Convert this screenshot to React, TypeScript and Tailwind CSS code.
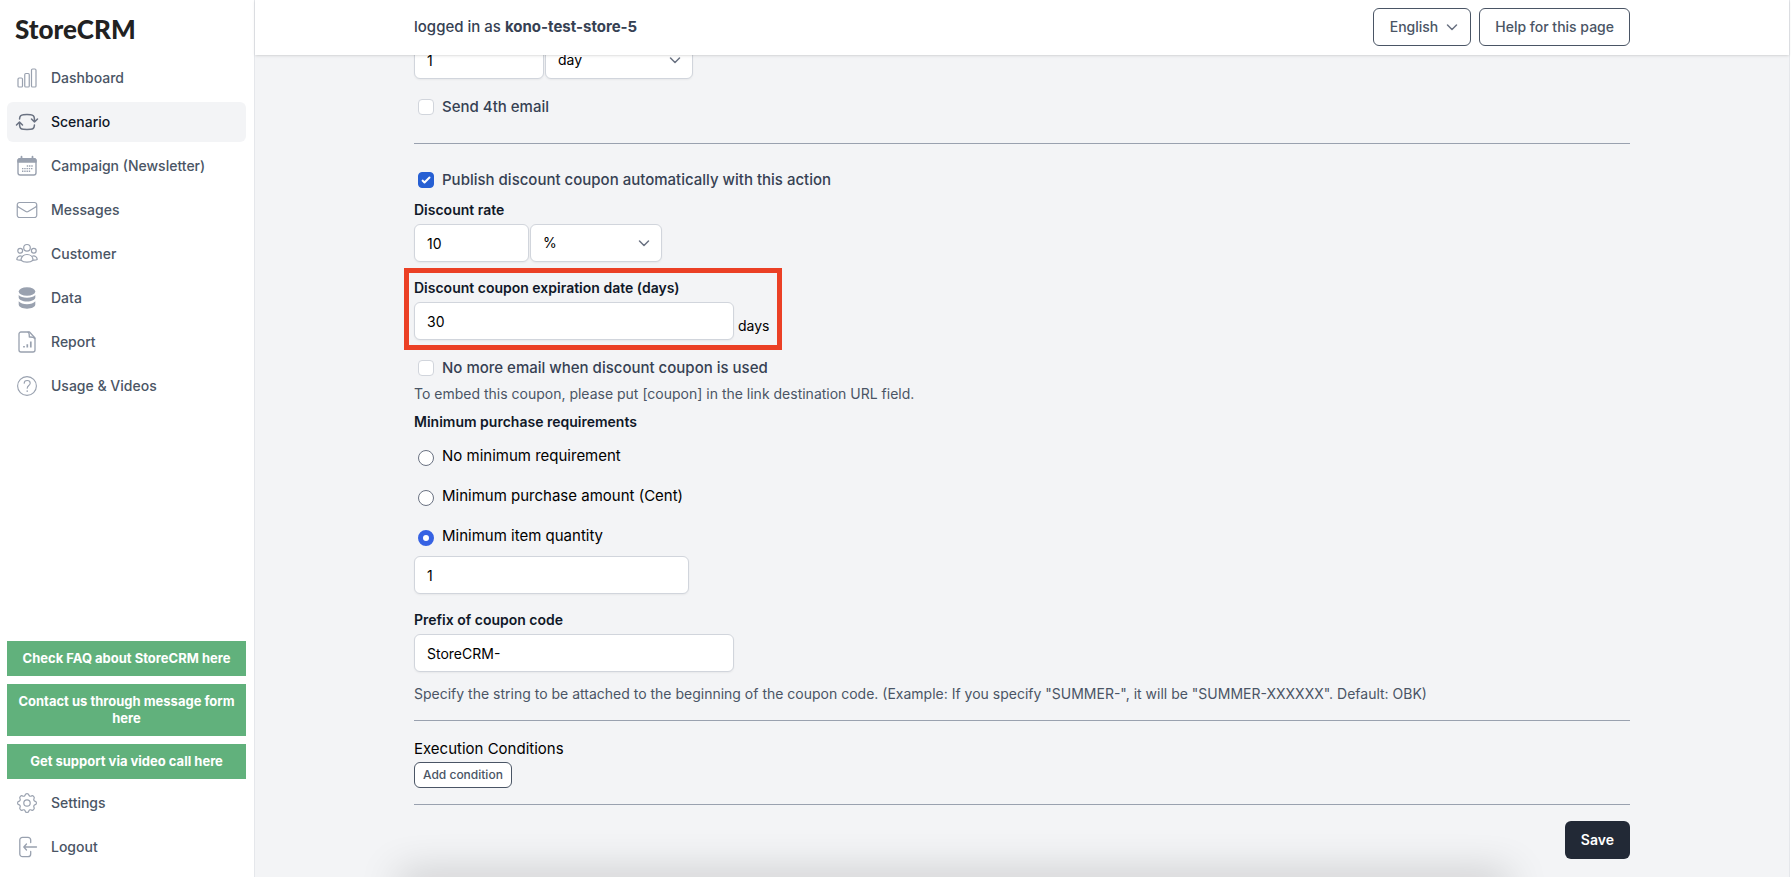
import React from "react";
import {
  HiOutlineArrowPathRoundedSquare,
  HiOutlineChartBar,
  HiOutlineEnvelope,
} from "react-icons/hi2";

const svgProps = {
  viewBox: "0 0 24 24",
  fill: "none",
  stroke: "currentColor",
  strokeLinecap: "round" as const,
  strokeLinejoin: "round" as const,
  "aria-hidden": true,
};

function CalendarIcon() {
  return (
    <svg {...svgProps} strokeWidth={1.4} className="size-6">
      <rect x="3" y="4.7" width="18" height="16.3" rx="2.2" />
      <path d="M3 8V6.500C3 5.500 4 4.700 5 4.700h14c1 0 2 .8 2 1.800V8z" fill="currentColor" />
      <path d="M6.500 2.700v2M17.500 2.700v2" strokeWidth={1.8} />
      <path d="M11.800 12h6.500M7 14.600h11.300M7 17.200h9" strokeWidth={1.400} strokeLinecap="butt" strokeDasharray="1.400 .850" />
    </svg>
  );
}

function CustomerIcon() {
  return (
    <svg {...svgProps} strokeWidth={1.2} className="size-6">
      <circle cx="12" cy="5.800" r="3.300" />
      <circle cx="5.200" cy="8.800" r="2.400" />
      <circle cx="18.800" cy="8.800" r="2.400" />
      <path d="M6 18.200c0-3.300 2.500-5.700 6-5.700s6 2.400 6 5.700c-1.600 1.500-3.700 2-6 2s-4.400-.5-6-2z" />
      <path d="M6.700 14.200c-2.900-.9-4.700 1-4.900 3.200.9.600 2.200.8 3.700.7M17.300 14.200c2.900-.9 4.700 1 4.900 3.200-.9.600-2.200.8-3.700.7" />
    </svg>
  );
}

function DataIcon() {
  return (
    <svg viewBox="0 0 24 24" fill="currentColor" aria-hidden className="size-6">
      <ellipse cx="12" cy="5.500" rx="8.300" ry="4.300" />
      <path d="M3.700 9c1.500 1.700 4.600 2.800 8.300 2.800s6.800-1.100 8.300-2.800v2.600c0 2.200-3.700 4-8.300 4s-8.300-1.800-8.300-4z" />
      <path d="M3.700 15.300c1.500 1.800 4.600 2.900 8.300 2.900s6.800-1.100 8.300-2.900v3.200c0 2.300-3.700 4.200-8.300 4.200s-8.300-1.900-8.300-4.200z" />
    </svg>
  );
}

function ReportIcon() {
  return (
    <svg {...svgProps} strokeWidth={1.3} className="size-6">
      <path d="M6 2h8.500L20 8v12a2 2 0 0 1-2 2H6a2 2 0 0 1-2-2V4a2 2 0 0 1 2-2z" />
      <path d="M13 2.200c1.500.6 1.300 2.300 1.300 4.800 2.900 0 4.800-.2 5.500 1.700" />
      <path d="M9 17.500V16M12.300 17.500v-3.300M15.800 17.500v-6" strokeWidth={1.700} strokeLinecap="butt" />
    </svg>
  );
}

function HelpIcon() {
  return (
    <svg {...svgProps} strokeWidth={1.1} className="size-6">
      <circle cx="12" cy="12" r="9.400" />
      <path d="M9.200 9.300c0-1.700 1.300-2.800 3-2.800s3 1.100 3 2.700c0 2.300-3 2.400-3 5" />
      <path d="M12.200 17v.3" strokeWidth={1.500} />
    </svg>
  );
}

function SettingsIcon() {
  return (
    <svg {...svgProps} strokeWidth={1.2} className="size-6">
      <circle cx="12" cy="12" r="3.200" />
      <path d="M10.300 3.700c.3-1.500 3.100-1.500 3.400 0 .3 1.400 1.600 2 2.900 1.200 1.300-.7 3.200 1.200 2.500 2.500-.8 1.300-.2 2.600 1.200 2.900 1.500.3 1.500 3.100 0 3.400-1.400.3-2 1.600-1.200 2.900.7 1.300-1.200 3.200-2.500 2.500-1.300-.8-2.600-.2-2.900 1.200-.3 1.500-3.100 1.500-3.400 0-.3-1.400-1.600-2-2.900-1.200-1.300.7-3.200-1.200-2.500-2.500.8-1.300.2-2.600-1.200-2.900-1.500-.3-1.500-3.100 0-3.400 1.400-.3 2-1.600 1.200-2.900-.7-1.300 1.200-3.200 2.500-2.500 1.300.8 2.600.2 2.900-1.200z" />
    </svg>
  );
}

function LogoutIcon() {
  return (
    <svg {...svgProps} strokeWidth={1.300} className="size-6">
      <path d="M15.700 7.500V5a2.700 2.700 0 0 0-2.700-2.700H7.500A2.700 2.700 0 0 0 4.800 5v14a2.700 2.700 0 0 0 2.700 2.700H13a2.700 2.700 0 0 0 2.700-2.700v-2.500" />
      <path d="M21.500 12H9M11.500 9 8.800 12l2.700 3" />
    </svg>
  );
}

function NavItem({ icon, label, active = false }: { icon: React.ReactNode; label: string; active?: boolean }) {
  return (
    <a
      href="#"
      className={
        active
          ? "flex h-10 items-center gap-3 rounded-md bg-gray-100 px-2 text-sm font-medium text-gray-900"
          : "flex h-10 items-center gap-3 rounded-md px-2 text-sm font-medium text-gray-600"
      }
    >
      <span className={active ? "text-gray-500" : "text-gray-400"}>{icon}</span>
      {label}
    </a>
  );
}

function Chevron() {
  return (
    <svg {...svgProps} viewBox="0 0 20 20" strokeWidth={1.5} className="pointer-events-none size-5 text-gray-500">
      <path d="M5.500 8l4.500 4.500L14.500 8" />
    </svg>
  );
}

const fieldClass = "h-[38px] rounded-md border border-gray-300 bg-white px-3 text-sm text-black shadow-xs";
const labelClass = "block text-sm font-semibold text-gray-900";

function SelectBox({ id, label, value, width }: { id: string; label: string; value: string; width: string }) {
  return (
    <div className={`grid items-center ${width}`}>
      <select id={id} aria-label={label} className={`${fieldClass} col-start-1 row-start-1 w-full appearance-none`}>
        <option>{value}</option>
      </select>
      <span className="pointer-events-none col-start-1 row-start-1 mr-2 justify-self-end">
        <Chevron />
      </span>
    </div>
  );
}

function CheckRow({ id, label, checked = false }: { id: string; label: string; checked?: boolean }) {
  return (
    <div className="flex h-6 items-center gap-2 pl-1">
      <span className="grid size-4">
        <input
          id={id}
          type="checkbox"
          defaultChecked={checked}
          className="peer col-start-1 row-start-1 size-4 appearance-none rounded border border-gray-300 bg-white checked:border-[#265fd3] checked:bg-[#265fd3]"
        />
        <svg viewBox="0 0 16 16" fill="white" aria-hidden className="pointer-events-none invisible col-start-1 row-start-1 size-4 peer-checked:visible">
          <path d="M12.200 4.800a1 1 0 0 1 0 1.400l-5 5a1 1 0 0 1-1.400 0l-2-2a1 1 0 0 1 1.400-1.400l1.300 1.300 4.300-4.300a1 1 0 0 1 1.400 0z" />
        </svg>
      </span>
      <label htmlFor={id} className="text-[15px] font-medium text-gray-700">
        {label}
      </label>
    </div>
  );
}

function RadioRow({ id, label, checked = false }: { id: string; label: string; checked?: boolean }) {
  return (
    <div className="flex h-6 items-center gap-2 pl-1">
      <input
        id={id}
        type="radio"
        name="minimum"
        defaultChecked={checked}
        className="mt-1 size-4 appearance-none rounded-full border border-gray-500 bg-white checked:border-5 checked:border-[#3662e3]"
      />
      <label htmlFor={id} className="text-[15px] text-black">
        {label}
      </label>
    </div>
  );
}

function Sidebar() {
  const support = "block bg-[#61b17c] px-2 py-[9px] text-center text-[13px] leading-[17px] font-bold text-white";
  return (
    <aside className="flex w-[255px] shrink-0 flex-col border-r border-gray-200 bg-white pr-2 pb-2.5 pl-[7px]">
      <div className="flex h-[58px] items-center pl-2 font-['Lato'] text-[26px] font-black text-[#222]">StoreCRM</div>
      <nav className="flex flex-1 flex-col gap-1">
        <NavItem icon={<HiOutlineChartBar className="size-6" strokeWidth={1.2} />} label="Dashboard" />
        <NavItem icon={<HiOutlineArrowPathRoundedSquare className="size-6" />} label="Scenario" active />
        <NavItem icon={<CalendarIcon />} label="Campaign (Newsletter)" />
        <NavItem icon={<HiOutlineEnvelope className="size-6" strokeWidth={1.2} />} label="Messages" />
        <NavItem icon={<CustomerIcon />} label="Customer" />
        <NavItem icon={<DataIcon />} label="Data" />
        <NavItem icon={<ReportIcon />} label="Report" />
        <NavItem icon={<HelpIcon />} label="Usage & Videos" />
      </nav>
      <div className="flex flex-col gap-2">
        <a href="#" className={support}>Check FAQ about StoreCRM here</a>
        <a href="#" className={support}>Contact us through message form here</a>
        <a href="#" className={support}>Get support via video call here</a>
      </div>
      <div className="mt-1 flex flex-col gap-1">
        <NavItem icon={<SettingsIcon />} label="Settings" />
        <NavItem icon={<LogoutIcon />} label="Logout" />
      </div>
    </aside>
  );
}

function Header() {
  const button = "flex h-[38px] items-center rounded-md border border-gray-600 bg-white text-sm font-medium text-gray-600";
  return (
    <header className="z-10 h-[55px] shrink-0 bg-white shadow-sm">
      <div className="mx-auto flex h-full max-w-7xl items-center justify-between px-8 pb-px">
        <p className="text-[15px] font-medium text-gray-700">
          logged in as <span className="font-bold">kono-test-store-5</span>
        </p>
        <div className="flex gap-2">
          <button type="button" className={`${button} gap-1 pr-2 pl-4`}>
            English
            <Chevron />
          </button>
          <button type="button" className={`${button} px-[15px]`}>Help for this page</button>
        </div>
      </div>
    </header>
  );
}

export default function App() {
  return (
    <div className="flex h-screen overflow-hidden bg-white font-['Inter',sans-serif]">
      <Sidebar />
      <div className="relative mr-px flex min-w-0 flex-1 flex-col border-r border-gray-200 bg-gray-100">
        <Header />
        <main className="min-h-0 flex-1 overflow-hidden">
          <form className="mx-auto max-w-7xl px-8">
            {/* the first row is scrolled partly under the header */}
            <div className="-mt-3.5 flex gap-px">
              <input aria-label="Delay" defaultValue="1" className={`${fieldClass} w-[130px]`} />
              <SelectBox id="delay-unit" label="Delay unit" value="day" width="w-[148px]" />
            </div>
            <div className="mt-4">
              <CheckRow id="fourth" label="Send 4th email" />
            </div>
            <hr className="mt-6 border-gray-400" />

            <div className="mt-6">
              <CheckRow id="publish" label="Publish discount coupon automatically with this action" checked />
            </div>
            <label htmlFor="rate" className={`${labelClass} mt-2`}>Discount rate</label>
            <div className="mt-1 flex gap-px">
              <input id="rate" defaultValue="10" className={`${fieldClass} w-[115px]`} />
              <SelectBox id="rate-unit" label="Discount unit" value="%" width="w-[132px]" />
            </div>

            <div className="relative mt-4 w-fit">
              <label htmlFor="expiration" className={labelClass}>Discount coupon expiration date (days)</label>
              <div className="mt-1 flex items-end gap-1">
                <input id="expiration" defaultValue="30" className={`${fieldClass} w-80`} />
                <span className="pb-1 text-sm text-black">days</span>
              </div>
              <div className="pointer-events-none absolute -top-2.5 -right-3 -bottom-2.5 -left-2.5 border-5 border-[#eb4025]" />
            </div>

            <div className="mt-4">
              <CheckRow id="stop" label="No more email when discount coupon is used" />
            </div>
            <p className="mt-1 text-sm text-gray-600">
              To embed this coupon, please put [coupon] in the link destination URL field.
            </p>

            <fieldset className="mt-2">
              <legend className={labelClass}>Minimum purchase requirements</legend>
              <div className="mt-3 flex flex-col gap-4">
                <RadioRow id="min-none" label="No minimum requirement" />
                <RadioRow id="min-amount" label="Minimum purchase amount (Cent)" />
                <RadioRow id="min-quantity" label="Minimum item quantity" checked />
              </div>
              <input aria-label="Item quantity" defaultValue="1" className={`${fieldClass} mt-2 block w-[275px]`} />
            </fieldset>

            <label htmlFor="prefix" className={`${labelClass} mt-4`}>Prefix of coupon code</label>
            <input id="prefix" defaultValue="StoreCRM-" className={`${fieldClass} mt-1 block w-80`} />
            <p className="mt-3 text-sm text-gray-600">
              Specify the string to be attached to the beginning of the coupon code. (Example: If you specify "SUMMER-", it will be "SUMMER-XXXXXX". Default: OBK)
            </p>
            <hr className="mt-4 border-gray-400" />

            <h2 className="mt-4 text-[15px] leading-6 text-black">Execution Conditions</h2>
            <button type="button" className="mt-px block rounded-md border border-gray-600 bg-white px-2 py-1 text-xs font-medium text-gray-600">
              Add condition
            </button>
            <hr className="mt-4 border-gray-400" />
            <div className="mt-4 flex justify-end">
              <button type="submit" className="h-[38px] rounded-md bg-[#222936] px-4 text-sm font-semibold text-white">
                Save
              </button>
            </div>
          </form>
        </main>
        <div className="pointer-events-none absolute right-70 -bottom-4 left-36 h-4 shadow-[0_0_40px_rgba(0,0,0,0.3)]" />
      </div>
    </div>
  );
}
